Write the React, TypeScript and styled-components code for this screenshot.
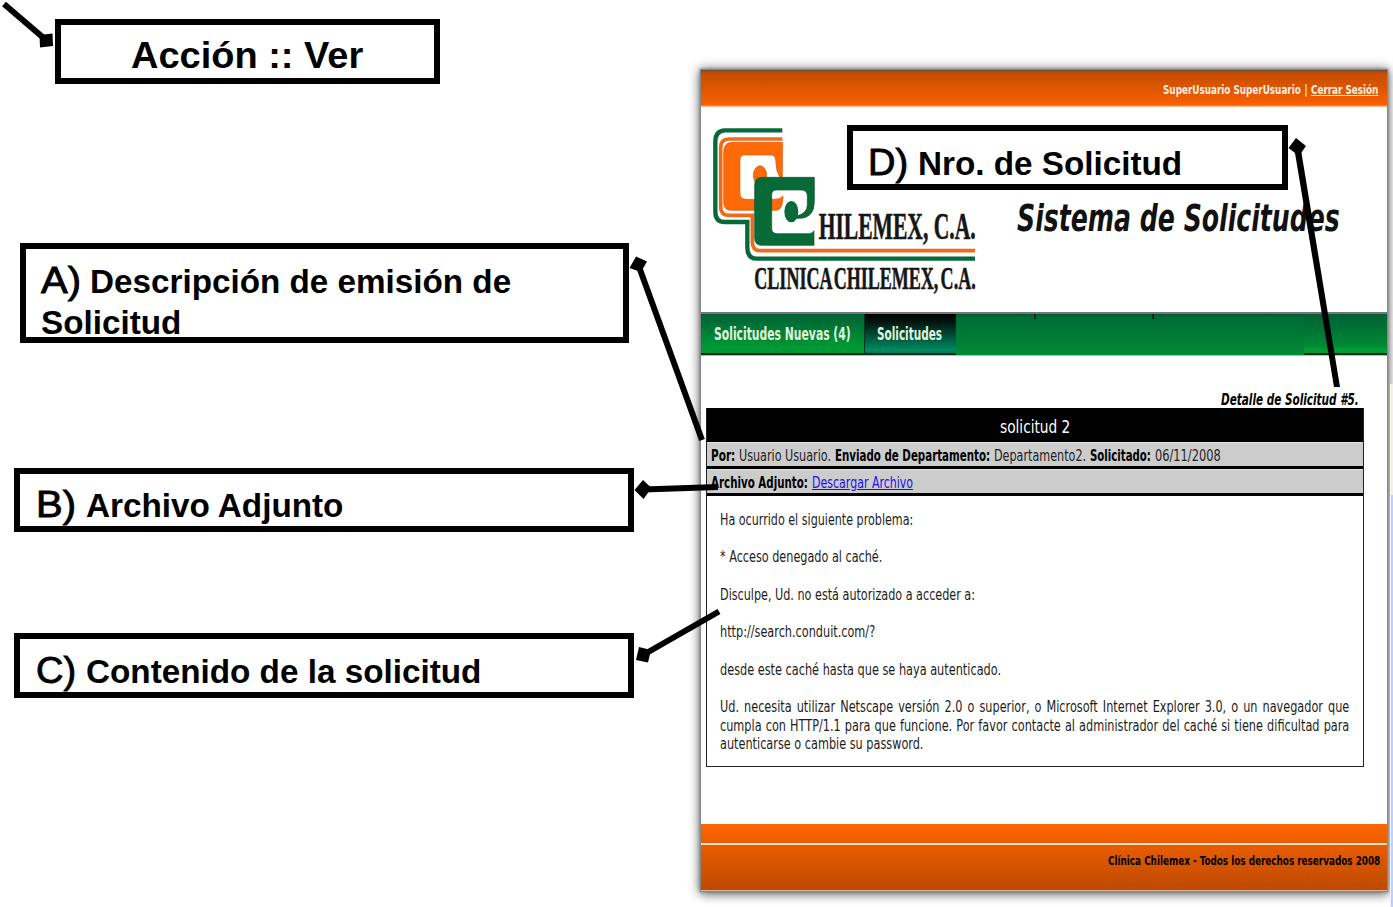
import React, { useLayoutEffect, useRef, useState } from "react";
import styled, { createGlobalStyle } from "styled-components";

const GlobalStyle = createGlobalStyle`
  html, body { margin: 0; padding: 0; background: #fff; overflow: hidden; }
  * { box-sizing: border-box; }
`;

const Page = styled.main`
  position: relative;
  width: 1393px;
  height: 907px;
  padding: 70px 0 0 701px;
  overflow: hidden;
  background: #fff;
  font-family: "DejaVu Sans Condensed", "DejaVu Sans", sans-serif;
  color: #000;
`;

/* Text stretched or condensed to an exact width */
const FitBox = styled.span<{ $width: number }>`
  display: inline-block;
  width: ${(p) => p.$width}px;
  white-space: pre;
`;
const FitInner = styled.span<{ $underline?: boolean }>`
  display: inline-block;
  transform-origin: 0 50%;
  text-decoration: ${(p) => (p.$underline ? "underline" : "none")};
`;

interface FitProps {
  width: number;
  underline?: boolean;
  children: React.ReactNode;
  className?: string;
}

function Fit({ width, underline, children, className }: FitProps) {
  const ref = useRef<HTMLSpanElement>(null);
  const [scale, setScale] = useState(1);
  useLayoutEffect(() => {
    if (ref.current && ref.current.offsetWidth) setScale(width / ref.current.offsetWidth);
  }, [width]);
  return (
    <FitBox $width={width} className={className}>
      <FitInner ref={ref} $underline={underline} style={{ transform: `scaleX(${scale})` }}>{children}</FitInner>
    </FitBox>
  );
}

const Window = styled.section`
  display: flex;
  flex-direction: column;
  width: 686px;
  height: 821px;
  background: #fff;
  box-shadow: 0 0 0 1px #83888c, 0 0 3px 1px #777, 0 0 10px 2px rgba(0, 0, 0, 0.4), 0 4px 10px 0 rgba(0, 0, 0, 0.3);
`;

const TopBar = styled.div`
  display: flex;
  justify-content: flex-end;
  height: 37px;
  padding: 10px 9px 0 0;
  background: linear-gradient(#5d5048 0, #b84a08 2px, #c64e00 4px, #fb6000 35px, #ffd9c0 37px);
  color: #ffeee0;
  font-size: 13px;
  font-weight: bold;
  line-height: 20px;
`;
const Divider = styled.span`
  margin: 0 4px 0 3px;
  width: 3px;
  font-weight: normal;
`;

const Header = styled.header`
  display: flex;
  justify-content: space-between;
  height: 205px;
  padding: 18px 47px 0 9px;
`;
const SystemTitle = styled.h1`
  margin: 67px 0 0;
  font-size: 37.5px;
  font-style: italic;
  font-weight: bold;
  line-height: 52px;
  color: #111;
`;

const Nav = styled.nav`
  display: flex;
  height: 44px;
  border-top: 2px solid #777;
  border-bottom: 1px solid #c9b3bd;
  color: #e0f3dc;
  font-size: 17px;
  font-weight: bold;
`;
const Tab = styled.div<{ $width: number; $active?: boolean }>`
  width: ${(p) => p.$width}px;
  padding-left: ${(p) => (p.$active ? 12 : 13)}px;
  line-height: 40px;
  border-bottom: 2px solid #06301b;
  background: ${(p) =>
    p.$active ? "linear-gradient(#000 0, #001510 8px, #008a60 36px, #007a55)" : "linear-gradient(#006035, #009a35 34px, #009a35)"};
  border-left: ${(p) => (p.$active ? "1px solid #03331c" : "0")};
`;
const NavFill = styled.div`
  display: flex;
  width: 348px;
  padding-left: 78px;
  gap: 116px;
  background: linear-gradient(#00582f 0, #006b36 3px, #008a34);
`;
const Tick = styled.i`
  width: 2px;
  height: 5px;
  background: #0a2c1a;
`;
const NavEnd = styled.div`
  flex: 1;
  border-bottom: 2px solid #06301b;
  background: linear-gradient(#006035, #008a34 32px, #009f35 36px, #009a35);
`;

const Content = styled.div`
  flex: 1;
  padding: 33px 23px 0 5px;
`;
const DetailTitle = styled.div`
  display: flex;
  justify-content: flex-end;
  height: 19px;
  padding-right: 5px;
  font-size: 16px;
  font-style: italic;
  font-weight: bold;
  line-height: 22px;
`;
const Card = styled.article`
  height: 359px;
  border: 1px solid #222;
  border-top: 0;
`;
const CardTitle = styled.h2`
  display: flex;
  justify-content: center;
  height: 34px;
  margin: 0;
  background: #000;
  color: #fff;
  font-size: 18.5px;
  font-weight: normal;
  line-height: 37px;
`;
const InfoRow = styled.div`
  display: flex;
  gap: 4px;
  height: 27px;
  padding-left: 4px;
  border-top: 1px solid #e2e2e2;
  border-bottom: 3px solid #000;
  background: #ccc;
  font-size: 16.5px;
  line-height: 25px;
  color: #222;
`;
const Label = styled(Fit)`
  font-weight: bold;
  color: #000;
`;
const Download = styled(Fit)`
  color: #1c10ee;
`;
const Message = styled.div`
  padding: 15px 13px 0;
  font-size: 16.5px;
  line-height: 18.7px;
  color: #1c1c1c;
`;
const Line = styled.div`
  height: 37.4px;
`;
const Paragraph = styled.p`
  width: 828px;
  margin: 0;
  transform: scaleX(0.76);
  transform-origin: 0 0;
`;
const JustifiedLine = styled.span<{ $last?: boolean }>`
  display: block;
  white-space: nowrap;
  text-align-last: ${(p) => (p.$last ? "left" : "justify")};
`;

const Footer = styled.footer`
  display: flex;
  justify-content: flex-end;
  height: 67px;
  padding: 27px 7px 0 0;
  border-bottom: 1px solid #d9b79c;
  background: linear-gradient(transparent 19px, #ffe0c8 19px, #ffe0c8 20.5px, transparent 21px), linear-gradient(#fd6600, #bd4900);
  font-size: 13px;
  font-weight: bold;
  line-height: 20px;
`;

/* Neighbouring desktop sliver visible right of the window */
const DesktopEdge = styled.div`
  position: absolute;
  left: 1390px;
  top: 384px;
  width: 3px;
  height: 523px;
  background: linear-gradient(#f3f1e8 0 111px, transparent 111px), linear-gradient(90deg, #edf1fb 1px, #bcd0fb 1px);
`;

const Callout = styled.div<{ $x: number; $y: number; $w: number; $h: number; $pad?: string; $title?: boolean }>`
  position: absolute;
  left: ${(p) => p.$x}px;
  top: ${(p) => p.$y}px;
  width: ${(p) => p.$w}px;
  height: ${(p) => p.$h}px;
  padding: ${(p) => p.$pad ?? "10.7px 0 0 16px"};
  border: 6px solid #000;
  background: #fff;
  font-family: "Liberation Sans", Arial, sans-serif;
  font-size: ${(p) => (p.$title ? 37.5 : 33)}px;
  font-weight: bold;
  line-height: 41px;
  white-space: nowrap;
`;
const Letter = styled(Fit)`
  margin-right: 10px;
  font-size: 37px;
  font-weight: normal;
  -webkit-text-stroke: 0.9px #000;
`;
const TightLetter = styled(Letter)`
  margin-right: 9px;
`;

const Connectors = styled.svg`
  position: absolute;
  left: 0;
  top: 0;
  pointer-events: none;
`;

const LogoSvg = styled.svg`
  flex: none;
  overflow: visible;
`;

function Logo() {
  return (
    <LogoSvg width="270" height="170" viewBox="60 195 810 510">
      <g fill="none">
        <path d="M277 211H105Q76 212 76 245V455Q76 486 105 486H172V562Q172 596 200 596H855" stroke="#07693a" strokeWidth="13" />
        <path d="M277 237H117Q92 237 92 262V440Q92 466 117 466H187V545Q187 572 210 572H855" stroke="#f06a1c" strokeWidth="11" />
      </g>
      <path
        fill="#ff6a08"
        stroke="#d85a10"
        strokeWidth="2"
        d="M278 247H125Q101 249 101 275V428Q101 451 125 451H260Q279 449 279 408Q270 418 255 418H165Q150 416 150 400V300Q150 285 163 285H245Q258 287 258 310Q258 335 270 352H277Z"
      />
      <ellipse cx="210" cy="346" rx="20" ry="29" fill="#ff6a08" stroke="#d85a10" strokeWidth="2" />
      <path
        fill="#076a37"
        stroke="#07522c"
        strokeWidth="2"
        d="M373 352H215Q194 354 194 375V535Q194 556 215 556H372V512Q368 521 355 521H262Q245 521 245 505V405Q245 390 260 390H335Q352 390 352 410V435Q352 460 320 468V475Q373 478 373 425Z"
      />
      <ellipse cx="304" cy="455" rx="21" ry="32" fill="#076a37" />
      <g fill="#161616" stroke="#161616" strokeWidth="1.800" fontFamily="Liberation Serif, Times New Roman, serif" fontWeight="bold">
        <text x="386" y="538" fontSize="113" textLength="471" lengthAdjust="spacingAndGlyphs">HILEMEX, C.A.</text>
        <text x="193" y="688" fontSize="97" textLength="664" lengthAdjust="spacingAndGlyphs" wordSpacing="-12">CLINICA CHILEMEX, C.A.</text>
      </g>
    </LogoSvg>
  );
}

export default function App() {
  return (
    <Page>
      <GlobalStyle />
      <Window>
        <TopBar>
          <Fit width={138}>SuperUsuario SuperUsuario</Fit>
          <Divider>|</Divider>
          <Fit width={67} underline>Cerrar Sesión</Fit>
        </TopBar>
        <Header>
          <Logo />
          <SystemTitle><Fit width={323}>Sistema de Solicitudes</Fit></SystemTitle>
        </Header>
        <Nav>
          <Tab $width={163}><Fit width={137}>Solicitudes Nuevas (4)</Fit></Tab>
          <Tab $width={92} $active><Fit width={65}>Solicitudes</Fit></Tab>
          <NavFill><Tick /><Tick /></NavFill>
          <NavEnd />
        </Nav>
        <Content>
          <DetailTitle><Fit width={138}>Detalle de Solicitud #5.</Fit></DetailTitle>
          <Card>
            <CardTitle><Fit width={70}>solicitud 2</Fit></CardTitle>
            <InfoRow>
              <Label width={24}>Por:</Label>
              <Fit width={92}>Usuario Usuario.</Fit>
              <Label width={155}>Enviado de Departamento:</Label>
              <Fit width={92}>Departamento2.</Fit>
              <Label width={61}>Solicitado:</Label>
              <Fit width={66}>06/11/2008</Fit>
            </InfoRow>
            <InfoRow>
              <Label width={97}>Archivo Adjunto:</Label>
              <Download width={101} underline>Descargar Archivo</Download>
            </InfoRow>
            <Message>
              <Line><Fit width={193}>Ha ocurrido el siguiente problema:</Fit></Line>
              <Line><Fit width={162}>* Acceso denegado al caché.</Fit></Line>
              <Line><Fit width={255}>Disculpe, Ud. no está autorizado a acceder a:</Fit></Line>
              <Line><Fit width={155}>http://search.conduit.com/?</Fit></Line>
              <Line><Fit width={281}>desde este caché hasta que se haya autenticado.</Fit></Line>
              <Paragraph>
                <JustifiedLine>Ud. necesita utilizar Netscape versión 2.0 o superior, o Microsoft Internet Explorer 3.0, o un navegador que</JustifiedLine>
                <JustifiedLine>cumpla con HTTP/1.1 para que funcione. Por favor contacte al administrador del caché si tiene dificultad para</JustifiedLine>
                <JustifiedLine $last>autenticarse o cambie su password.</JustifiedLine>
              </Paragraph>
            </Message>
          </Card>
        </Content>
        <Footer>
          <Fit width={272}>Clínica Chilemex - Todos los derechos reservados 2008</Fit>
        </Footer>
      </Window>
      <DesktopEdge />

      <Callout $x={55} $y={19} $w={385} $h={65} $pad="9.5px 0 0 70px" $title>
        <Fit width={232}>Acción :: Ver</Fit>
      </Callout>
      <Callout $x={20} $y={243} $w={609} $h={100} $pad="10.7px 0 0 15px">
        <TightLetter width={40}>A)</TightLetter><Fit width={421}>Descripción de emisión de</Fit>
        <br />
        <Fit width={140}>Solicitud</Fit>
      </Callout>
      <Callout $x={14} $y={468} $w={620} $h={64} $pad="9.7px 0 0 16px">
        <Letter width={40}>B)</Letter><Fit width={257}>Archivo Adjunto</Fit>
      </Callout>
      <Callout $x={14} $y={633} $w={620} $h={65} $pad="10.7px 0 0 16px">
        <Letter width={40}>C)</Letter><Fit width={395}>Contenido de la solicitud</Fit>
      </Callout>
      <Callout $x={847} $y={125} $w={441} $h={65} $pad="10.7px 0 0 15px">
        <Letter width={40}>D)</Letter><Fit width={264}>Nro. de Solicitud</Fit>
      </Callout>

      <Connectors width="1393" height="907">
        <g stroke="#000" strokeWidth="6">
          <path d="M4 4L46 40M638 264L702 440M643 489.5L718 487M643 655L719 611.500" fill="none" />
        </g>
        <path d="M1294 147H1300.500L1340 387H1334Z" />
        <path d="M39.500 35L52.500 33.500L53 46L40 47.500ZM629.500 268L636 256.500L647 261.500L641 272ZM634.500 490L643 480L651.500 488L643.500 499ZM639 647L651 650L648 662.500L636 660ZM1288.500 148L1296 138L1306 146L1299 156Z" />
      </Connectors>
    </Page>
  );
}
